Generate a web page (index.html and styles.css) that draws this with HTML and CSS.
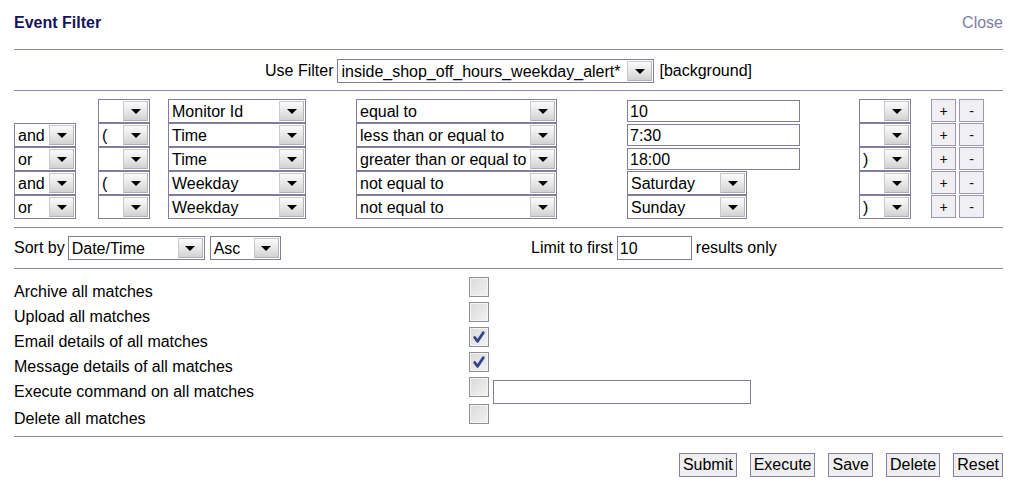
FILE: index.html
```html
<!DOCTYPE html>
<html>
<head>
<meta charset="utf-8">
<title>Event Filter</title>
<link rel="stylesheet" href="styles.css">
</head>
<body>
<div class="page">
  <div class="header">
    <div class="title">Event Filter</div>
    <div class="close">Close</div>
  </div>
  <div class="usefilter">
    <span>Use Filter</span>
    <span class="sel w-filter"><span class="sel-t">inside_shop_off_hours_weekday_alert*</span><span class="sel-b"></span></span>
    <span>[background]</span>
  </div>
  <div class="terms">
    <div class="cell"></div>
    <div class="cell"><span class="sel w-par"><span class="sel-t"></span><span class="sel-b"></span></span></div>
    <div class="cell"><span class="sel w-attr"><span class="sel-t">Monitor Id</span><span class="sel-b"></span></span></div>
    <div class="cell"><span class="sel w-op"><span class="sel-t">equal to</span><span class="sel-b"></span></span></div>
    <div class="cell"><input class="txt w-val" type="text" value="10"></div>
    <div class="cell"><span class="sel w-par"><span class="sel-t"></span><span class="sel-b"></span></span></div>
    <div class="cell pm"><button class="sbtn">+</button><button class="sbtn">-</button></div>

    <div class="cell"><span class="sel w-cnj"><span class="sel-t">and</span><span class="sel-b"></span></span></div>
    <div class="cell"><span class="sel w-par"><span class="sel-t">(</span><span class="sel-b"></span></span></div>
    <div class="cell"><span class="sel w-attr"><span class="sel-t">Time</span><span class="sel-b"></span></span></div>
    <div class="cell"><span class="sel w-op"><span class="sel-t">less than or equal to</span><span class="sel-b"></span></span></div>
    <div class="cell"><input class="txt w-val" type="text" value="7:30"></div>
    <div class="cell"><span class="sel w-par"><span class="sel-t"></span><span class="sel-b"></span></span></div>
    <div class="cell pm"><button class="sbtn">+</button><button class="sbtn">-</button></div>

    <div class="cell"><span class="sel w-cnj"><span class="sel-t">or</span><span class="sel-b"></span></span></div>
    <div class="cell"><span class="sel w-par"><span class="sel-t"></span><span class="sel-b"></span></span></div>
    <div class="cell"><span class="sel w-attr"><span class="sel-t">Time</span><span class="sel-b"></span></span></div>
    <div class="cell"><span class="sel w-op"><span class="sel-t">greater than or equal to</span><span class="sel-b"></span></span></div>
    <div class="cell"><input class="txt w-val" type="text" value="18:00"></div>
    <div class="cell"><span class="sel w-par"><span class="sel-t">)</span><span class="sel-b"></span></span></div>
    <div class="cell pm"><button class="sbtn">+</button><button class="sbtn">-</button></div>

    <div class="cell"><span class="sel w-cnj"><span class="sel-t">and</span><span class="sel-b"></span></span></div>
    <div class="cell"><span class="sel w-par"><span class="sel-t">(</span><span class="sel-b"></span></span></div>
    <div class="cell"><span class="sel w-attr"><span class="sel-t">Weekday</span><span class="sel-b"></span></span></div>
    <div class="cell"><span class="sel w-op"><span class="sel-t">not equal to</span><span class="sel-b"></span></span></div>
    <div class="cell"><span class="sel w-day"><span class="sel-t">Saturday</span><span class="sel-b"></span></span></div>
    <div class="cell"><span class="sel w-par"><span class="sel-t"></span><span class="sel-b"></span></span></div>
    <div class="cell pm"><button class="sbtn">+</button><button class="sbtn">-</button></div>

    <div class="cell"><span class="sel w-cnj"><span class="sel-t">or</span><span class="sel-b"></span></span></div>
    <div class="cell"><span class="sel w-par"><span class="sel-t"></span><span class="sel-b"></span></span></div>
    <div class="cell"><span class="sel w-attr"><span class="sel-t">Weekday</span><span class="sel-b"></span></span></div>
    <div class="cell"><span class="sel w-op"><span class="sel-t">not equal to</span><span class="sel-b"></span></span></div>
    <div class="cell"><span class="sel w-day"><span class="sel-t">Sunday</span><span class="sel-b"></span></span></div>
    <div class="cell"><span class="sel w-par"><span class="sel-t">)</span><span class="sel-b"></span></span></div>
    <div class="cell pm"><button class="sbtn">+</button><button class="sbtn">-</button></div>
  </div>
  <div class="sortrow">
    <div class="sortgrp">
      <span>Sort by</span>
      <span class="sel w-sort"><span class="sel-t">Date/Time</span><span class="sel-b"></span></span>
      <span class="sel w-asc"><span class="sel-t">Asc</span><span class="sel-b"></span></span>
    </div>
    <div class="limitgrp">
      <span>Limit to first</span>
      <input class="txt w-limit" type="text" value="10">
      <span>results only</span>
    </div>
  </div>
  <div class="actions">
    <div class="lbl">Archive all matches</div>
    <div class="ctl"><span class="cb"></span></div>
    <div class="lbl">Upload all matches</div>
    <div class="ctl"><span class="cb"></span></div>
    <div class="lbl">Email details of all matches</div>
    <div class="ctl"><span class="cb"><svg viewBox="0 0 19 19" width="19" height="19"><path d="M5 9.5 L8 13.5 L14 4.5" fill="none" stroke="#33468c" stroke-width="3" stroke-linecap="round" stroke-linejoin="round"/></svg></span></div>
    <div class="lbl">Message details of all matches</div>
    <div class="ctl"><span class="cb"><svg viewBox="0 0 19 19" width="19" height="19"><path d="M5 9.5 L8 13.5 L14 4.5" fill="none" stroke="#33468c" stroke-width="3" stroke-linecap="round" stroke-linejoin="round"/></svg></span></div>
    <div class="lbl">Execute command on all matches</div>
    <div class="ctl"><span class="cb"></span><input class="txt w-cmd" type="text" value=""></div>
    <div class="lbl">Delete all matches</div>
    <div class="ctl"><span class="cb"></span></div>
  </div>
  <div class="buttons">
    <button class="btn">Submit</button>
    <button class="btn">Execute</button>
    <button class="btn">Save</button>
    <button class="btn">Delete</button>
    <button class="btn">Reset</button>
  </div>
</div>
</body>
</html>
```

FILE: styles.css
```css
html, body {
  margin: 0;
  padding: 0;
  background: #ffffff;
}
body {
  font-family: "Liberation Sans", Arial, sans-serif;
  font-size: 16px;
  color: #000;
}
.page {
  padding: 0 10px 0 14px;
}
.header {
  display: flex;
  justify-content: space-between;
  padding-top: 14px;
  line-height: 18px;
  padding-bottom: 17px;
  border-bottom: 1px solid #8b89a9;
}
.title {
  font-weight: bold;
  color: #14145a;
}
.close {
  color: #7e7ea2;
}
.usefilter {
  display: flex;
  justify-content: center;
  align-items: center;
  gap: 4px;
  padding: 9px 0 7px;
  border-bottom: 1px solid #8b89a9;
  line-height: 22px;
}
.usefilter .sel { margin-right: 1px; }

/* pseudo select */
.sel {
  display: inline-flex;
  box-sizing: border-box;
  height: 24px;
  border: 1px solid #807e9f;
  background: #fff;
  vertical-align: middle;
}
.sel-t {
  flex: 1;
  padding-left: 3px;
  padding-top: 1px;
  line-height: 21px;
  white-space: nowrap;
  overflow: hidden;
}
.sel-b {
  box-sizing: border-box;
  width: 25px;
  margin: 1px 1px 1px 0;
  border: 1px solid #c9c9c9;
  border-right-color: #b5b5b5;
  border-bottom-color: #b0b0b0;
  background: linear-gradient(#fbfbfb, #e6e6e6 55%, #d2d2d2);
  display: flex;
  align-items: center;
  justify-content: center;
}
.sel-b::after {
  content: "";
  width: 0;
  height: 0;
  border-left: 5px solid transparent;
  border-right: 5px solid transparent;
  border-top: 5px solid #000;
}
.w-filter { width: 317px; }
.w-cnj { width: 62px; }
.w-par { width: 52px; }
.w-attr { width: 138px; }
.w-op { width: 201px; }
.w-day { width: 120px; }
.w-sort { width: 137px; }
.w-asc { width: 71px; margin-left: 2px; }

.txt {
  box-sizing: border-box;
  height: 22px;
  border: 1px solid #807e9f;
  padding: 1px 2px 0;
  font-family: "Liberation Sans", Arial, sans-serif;
  font-size: 16px;
  color: #000;
  background: #fff;
  outline: none;
  margin: 0;
}
.w-val { width: 173px; }
.w-limit { width: 75px; height: 24px; }
.w-cmd { width: 258px; height: 24px; }

.terms {
  display: grid;
  grid-template-columns: 84px 70px 188px 271px 232px 72px auto;
  grid-auto-rows: 24px;
  padding: 8px 0 8px;
  border-bottom: 1px solid #8b89a9;
}
.cell {
  display: flex;
  align-items: center;
}
.cell.pm {
  align-items: flex-start;
  gap: 3px;
}
.sbtn {
  box-sizing: border-box;
  width: 25px;
  height: 23px;
  margin: 0;
  padding: 0;
  border: 1px solid #9a98b8;
  background: #f0f0f2;
  font-family: "Liberation Sans", Arial, sans-serif;
  font-size: 14px;
  color: #000;
}

.sortrow {
  display: grid;
  grid-template-columns: 517px auto;
  align-items: center;
  padding: 8px 0 8px;
  border-bottom: 1px solid #8b89a9;
  line-height: 22px;
}
.sortgrp, .limitgrp {
  display: flex;
  align-items: center;
  gap: 3px;
}
.limitgrp { gap: 4px; }

.actions {
  display: grid;
  grid-template-columns: 455px auto;
  grid-template-rows: 25px 25px 25px 25px 27px 25px;
  padding: 7px 0 8px;
  border-bottom: 1px solid #8b89a9;
}
.lbl {
  padding-top: 6px;
  line-height: 19px;
  white-space: nowrap;
}
.ctl {
  display: flex;
  align-items: flex-start;
  gap: 4px;
}
.ctl .w-cmd { margin-top: 4px; }
.cb {
  box-sizing: border-box;
  width: 20px;
  height: 20px;
  margin-top: 1px;
  border: 1px solid #8f8f8f;
  box-shadow: inset 0 0 0 1px #f4f4f4;
  background: linear-gradient(135deg, #d9d9d9, #f3f3f3);
  display: flex;
  align-items: center;
  justify-content: center;
}
.cb svg { display: block; }

.buttons {
  display: flex;
  justify-content: flex-end;
  gap: 13px;
  padding-top: 16px;
}
.btn {
  box-sizing: border-box;
  height: 24px;
  margin: 0;
  padding: 0 3px;
  border: 1px solid #8582a4;
  background: #efeff2;
  font-family: "Liberation Sans", Arial, sans-serif;
  font-size: 16px;
  color: #000;
  line-height: 20px;
}
```
